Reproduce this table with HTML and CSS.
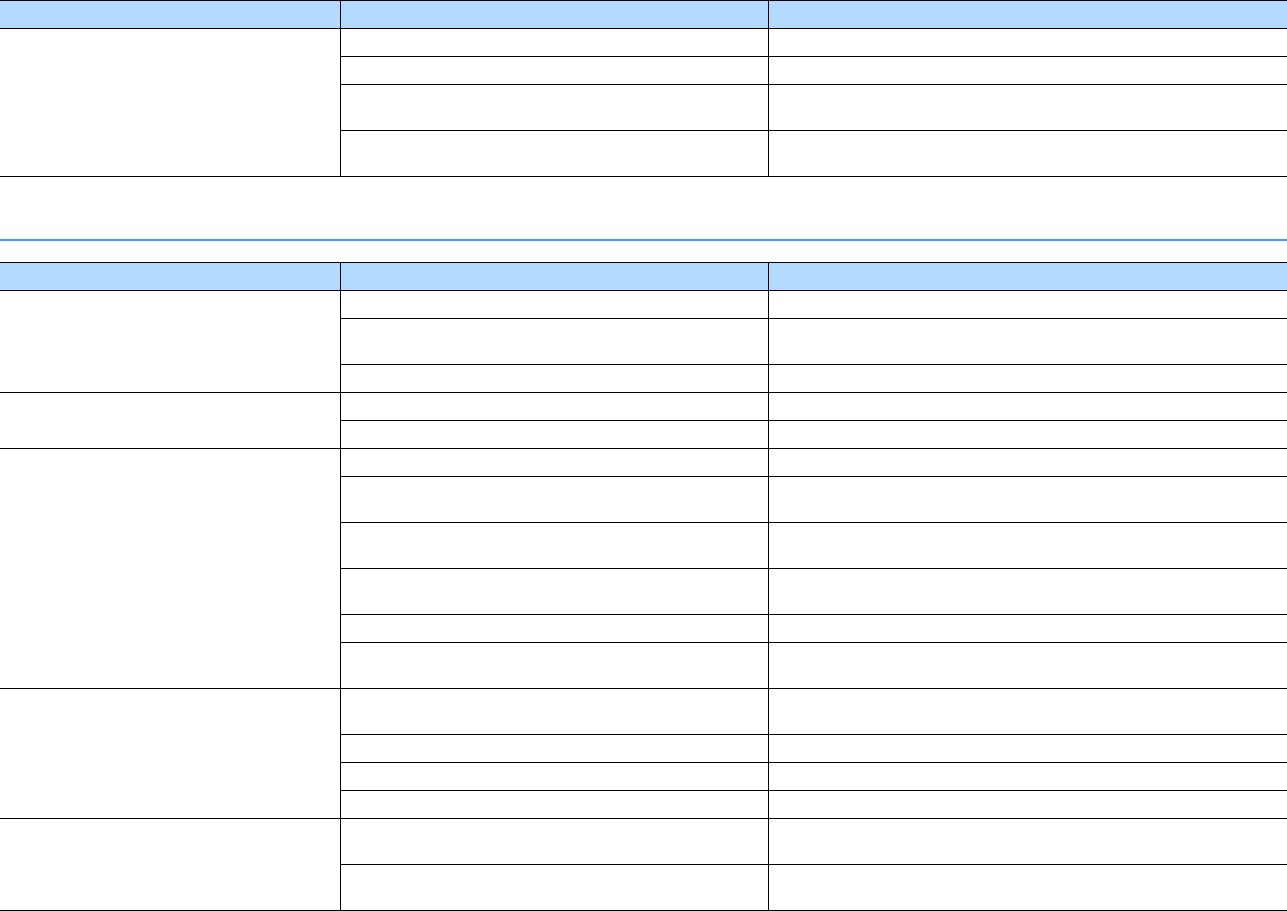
FILE: index.html
```html
<!DOCTYPE html>
<html lang="en">
<head>
  <meta charset="UTF-8">
  <meta name="viewport" content="width=device-width, initial-scale=1.0">
  <title>Tables</title>
  <link rel="stylesheet" href="styles.css">
</head>
<body>
  <table class="grid">
    <colgroup>
      <col class="col-a">
      <col class="col-b">
      <col class="col-c">
    </colgroup>
    <thead>
      <tr><th>&nbsp;</th><th>&nbsp;</th><th>&nbsp;</th></tr>
    </thead>
    <tbody>
      <tr><td rowspan="4"></td><td>&nbsp;</td><td>&nbsp;</td></tr>
      <tr><td>&nbsp;</td><td>&nbsp;</td></tr>
      <tr><td>&nbsp;<br>&nbsp;</td><td>&nbsp;<br>&nbsp;</td></tr>
      <tr><td>&nbsp;<br>&nbsp;</td><td>&nbsp;<br>&nbsp;</td></tr>
    </tbody>
  </table>

  <hr class="rule">

  <table class="grid">
    <colgroup>
      <col class="col-a">
      <col class="col-b">
      <col class="col-c">
    </colgroup>
    <thead>
      <tr><th>&nbsp;</th><th>&nbsp;</th><th>&nbsp;</th></tr>
    </thead>
    <tbody>
      <tr><td rowspan="3"></td><td>&nbsp;</td><td>&nbsp;</td></tr>
      <tr><td>&nbsp;<br>&nbsp;</td><td>&nbsp;<br>&nbsp;</td></tr>
      <tr><td>&nbsp;</td><td>&nbsp;</td></tr>

      <tr><td rowspan="2"></td><td>&nbsp;</td><td>&nbsp;</td></tr>
      <tr><td>&nbsp;</td><td>&nbsp;</td></tr>

      <tr><td rowspan="6"></td><td>&nbsp;</td><td>&nbsp;</td></tr>
      <tr><td>&nbsp;<br>&nbsp;</td><td>&nbsp;<br>&nbsp;</td></tr>
      <tr><td>&nbsp;<br>&nbsp;</td><td>&nbsp;<br>&nbsp;</td></tr>
      <tr><td>&nbsp;<br>&nbsp;</td><td>&nbsp;<br>&nbsp;</td></tr>
      <tr><td>&nbsp;</td><td>&nbsp;</td></tr>
      <tr><td>&nbsp;<br>&nbsp;</td><td>&nbsp;<br>&nbsp;</td></tr>

      <tr><td rowspan="4"></td><td>&nbsp;<br>&nbsp;</td><td>&nbsp;<br>&nbsp;</td></tr>
      <tr><td>&nbsp;</td><td>&nbsp;</td></tr>
      <tr><td>&nbsp;</td><td>&nbsp;</td></tr>
      <tr><td>&nbsp;</td><td>&nbsp;</td></tr>

      <tr><td rowspan="2"></td><td>&nbsp;<br>&nbsp;</td><td>&nbsp;<br>&nbsp;</td></tr>
      <tr><td>&nbsp;<br>&nbsp;</td><td>&nbsp;<br>&nbsp;</td></tr>
    </tbody>
  </table>
</body>
</html>
```

FILE: styles.css
```css
body {
  margin: 0;
  font-family: "Liberation Sans", Arial, sans-serif;
  font-size: 13px;
  color: #000;
  background-color: #fff;
}
.grid {
  width: 100%;
  border-collapse: collapse;
  table-layout: fixed;
  border-left: hidden;
  border-right: hidden;
}
.col-a {
  width: 340px;
}
.col-b {
  width: 428px;
}
.grid th, .grid td {
  border: 1px solid #000;
  padding: 4px 8px 5px;
  line-height: 18px;
  text-align: left;
  vertical-align: top;
  font-weight: normal;
}
.grid th {
  background-color: #b3d9fe;
}
.rule {
  margin: 62px 0 21px;
  height: 2px;
  border: none;
  background-color: #3d9ff6;
}
```
